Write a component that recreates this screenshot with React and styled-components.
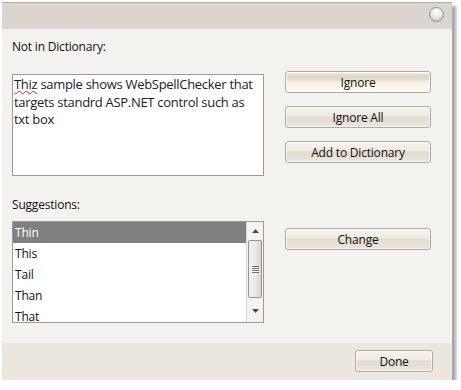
import React from "react";
import styled, { createGlobalStyle } from "styled-components";

const GlobalStyle = createGlobalStyle`
  body {
    margin: 0;
    background: #ffffff;
    font-family: "Open Sans", "Noto Sans", sans-serif;
    color: #111;
  }
`;

const Dialog = styled.div`
  margin: 2px 0 0 2px;
  width: 450px;
  height: 377px;
  border-top: 1px solid #b1ae93;
  background: #f4f2ee;
  box-shadow: 4px 4px 3px rgba(0, 0, 0, 0.35);
  display: flex;
  flex-direction: column;
`;

const TitleBar = styled.div`
  height: 26px;
  background: #dad5cf;
  display: flex;
  justify-content: flex-end;
  align-items: center;
  padding-right: 8px;
`;

const CloseButton = styled.div`
  width: 13px;
  height: 13px;
  border-radius: 50%;
  border: 1px solid #8f8f8f;
  background: radial-gradient(circle at 50% 30%, #ffffff 0%, #e8e8e8 45%, #b8b8b8 100%);
  margin-top: -4px;
`;

const Body = styled.div`
  height: 314px;
  padding: 9px 21px 0 10px;
  box-sizing: border-box;
`;

const Label = styled.div`
  font-size: 12px;
  line-height: 18px;
  letter-spacing: -0.2px;
  margin-top: ${p => p.$top || 0}px;
  margin-bottom: ${p => p.$bottom}px;
`;

const Row = styled.div`
  display: flex;
  align-items: flex-start;
  gap: 21px;
`;

const TextBox = styled.div`
  width: 252px;
  height: 102px;
  margin-top: 3px;
  box-sizing: border-box;
  border: 1px solid #9a9a9a;
  background: #fff;
  padding: 1px 6px 1px 1px;
  font-size: 13px;
  line-height: 17.5px;
  letter-spacing: -0.3px;
  color: #1a1a2e;
`;

const Misspelled = styled.span`
  text-decoration: underline wavy #e02020;
  text-decoration-thickness: 1px;
  text-underline-offset: 1px;
`;

const ButtonColumn = styled.div`
  display: flex;
  flex-direction: column;
  gap: 13px;
`;

const Button = styled.button`
  width: ${p => p.$width || 146}px;
  height: 22px;
  margin-top: ${p => p.$top || 0}px;
  padding: 0;
  border: 1px solid #ababab;
  border-radius: 3px;
  font-family: inherit;
  font-size: 12px;
  letter-spacing: -0.2px;
  color: #111;
  background: ${p =>
    p.$default
      ? "linear-gradient(#ffffff 0px, #e6dfcc 2px, #ddd5c1 6px, #f7f2e6 11px, #fffbf2 100%)"
      : "linear-gradient(#f6f4ef 0%, #eeeae2 45%, #e2dccf 50%, #ebe6dc 100%)"};
  box-shadow: inset 0 0 0 1px ${p => (p.$default ? "#ffffff" : "rgba(255,255,255,0.6)")};
`;

const ListBox = styled.div`
  width: 252px;
  height: 102px;
  box-sizing: border-box;
  border: 1px solid #9a9a9a;
  background: #fff;
  display: flex;
  overflow: hidden;
`;

const Items = styled.div`
  flex: 1;
  overflow: hidden;
`;

const Item = styled.div`
  height: 21px;
  line-height: 21px;
  padding-left: 2px;
  font-size: 12px;
  letter-spacing: -0.2px;
  background: ${p => (p.$selected ? "#808080" : "transparent")};
  color: ${p => (p.$selected ? "#ffffff" : "#111")};
`;

const ScrollBar = styled.div`
  width: 16px;
  border-left: 1px solid #d6d6d6;
  background: #f3f3f3;
  display: flex;
  flex-direction: column;
`;

const Arrow = styled.div`
  height: ${p => p.$h}px;
  display: flex;
  align-items: center;
  justify-content: center;
`;

const Track = styled.div`
  flex: 1;
`;

const Thumb = styled.div`
  height: 58px;
  margin: 0 1px;
  box-sizing: border-box;
  border: 1px solid #959595;
  border-radius: 2px;
  background: linear-gradient(90deg, #f2f2f2 0%, #e9e9e9 50%, #d6d6d6 100%);
  display: flex;
  flex-direction: column;
  align-items: center;
  justify-content: center;
  gap: 1px;
`;

const Grip = styled.div`
  width: 7px;
  height: 1px;
  background: #6d6d6d;
  box-shadow: 0 1px 0 #ffffff;
`;

const Footer = styled.div`
  flex: 1;
  background: #ebe7de;
  display: flex;
  justify-content: flex-end;
  padding: 7px 19px 0 0;
`;

const Triangle = ({ up }) => (
  <svg width="7" height="4" viewBox="0 0 7 4">
    <path d={up ? "M0 4 L3.5 0 L7 4 Z" : "M0 0 L3.5 4 L7 0 Z"} fill="#4a4a4a" />
  </svg>
);

const suggestions = ["Thin", "This", "Tail", "Than", "That"];

const App = () => (
  <>
    <GlobalStyle />
    <Dialog>
      <TitleBar>
        <CloseButton />
      </TitleBar>
      <Body>
        <Label $bottom={15}>Not in Dictionary:</Label>
        <Row>
          <TextBox>
            <Misspelled>Thiz</Misspelled> sample shows WebSpellChecker that
            targets standrd ASP.NET control such as txt box
          </TextBox>
          <ButtonColumn>
            <Button $default>Ignore</Button>
            <Button>Ignore All</Button>
            <Button>Add to Dictionary</Button>
          </ButtonColumn>
        </Row>
        <Label $top={20} $bottom={7}>Suggestions:</Label>
        <Row>
          <ListBox>
            <Items>
              {suggestions.map((s, i) => (
                <Item key={s} $selected={i === 0}>{s}</Item>
              ))}
            </Items>
            <ScrollBar>
              <Arrow $h={18}><Triangle up /></Arrow>
              <Track>
                <Thumb>
                  <Grip />
                  <Grip />
                  <Grip />
                  <Grip />
                </Thumb>
              </Track>
              <Arrow $h={22}><Triangle /></Arrow>
            </ScrollBar>
          </ListBox>
          <Button $top={7}>Change</Button>
        </Row>
      </Body>
      <Footer>
        <Button $width={78}>Done</Button>
      </Footer>
    </Dialog>
  </>
);

export default App;
